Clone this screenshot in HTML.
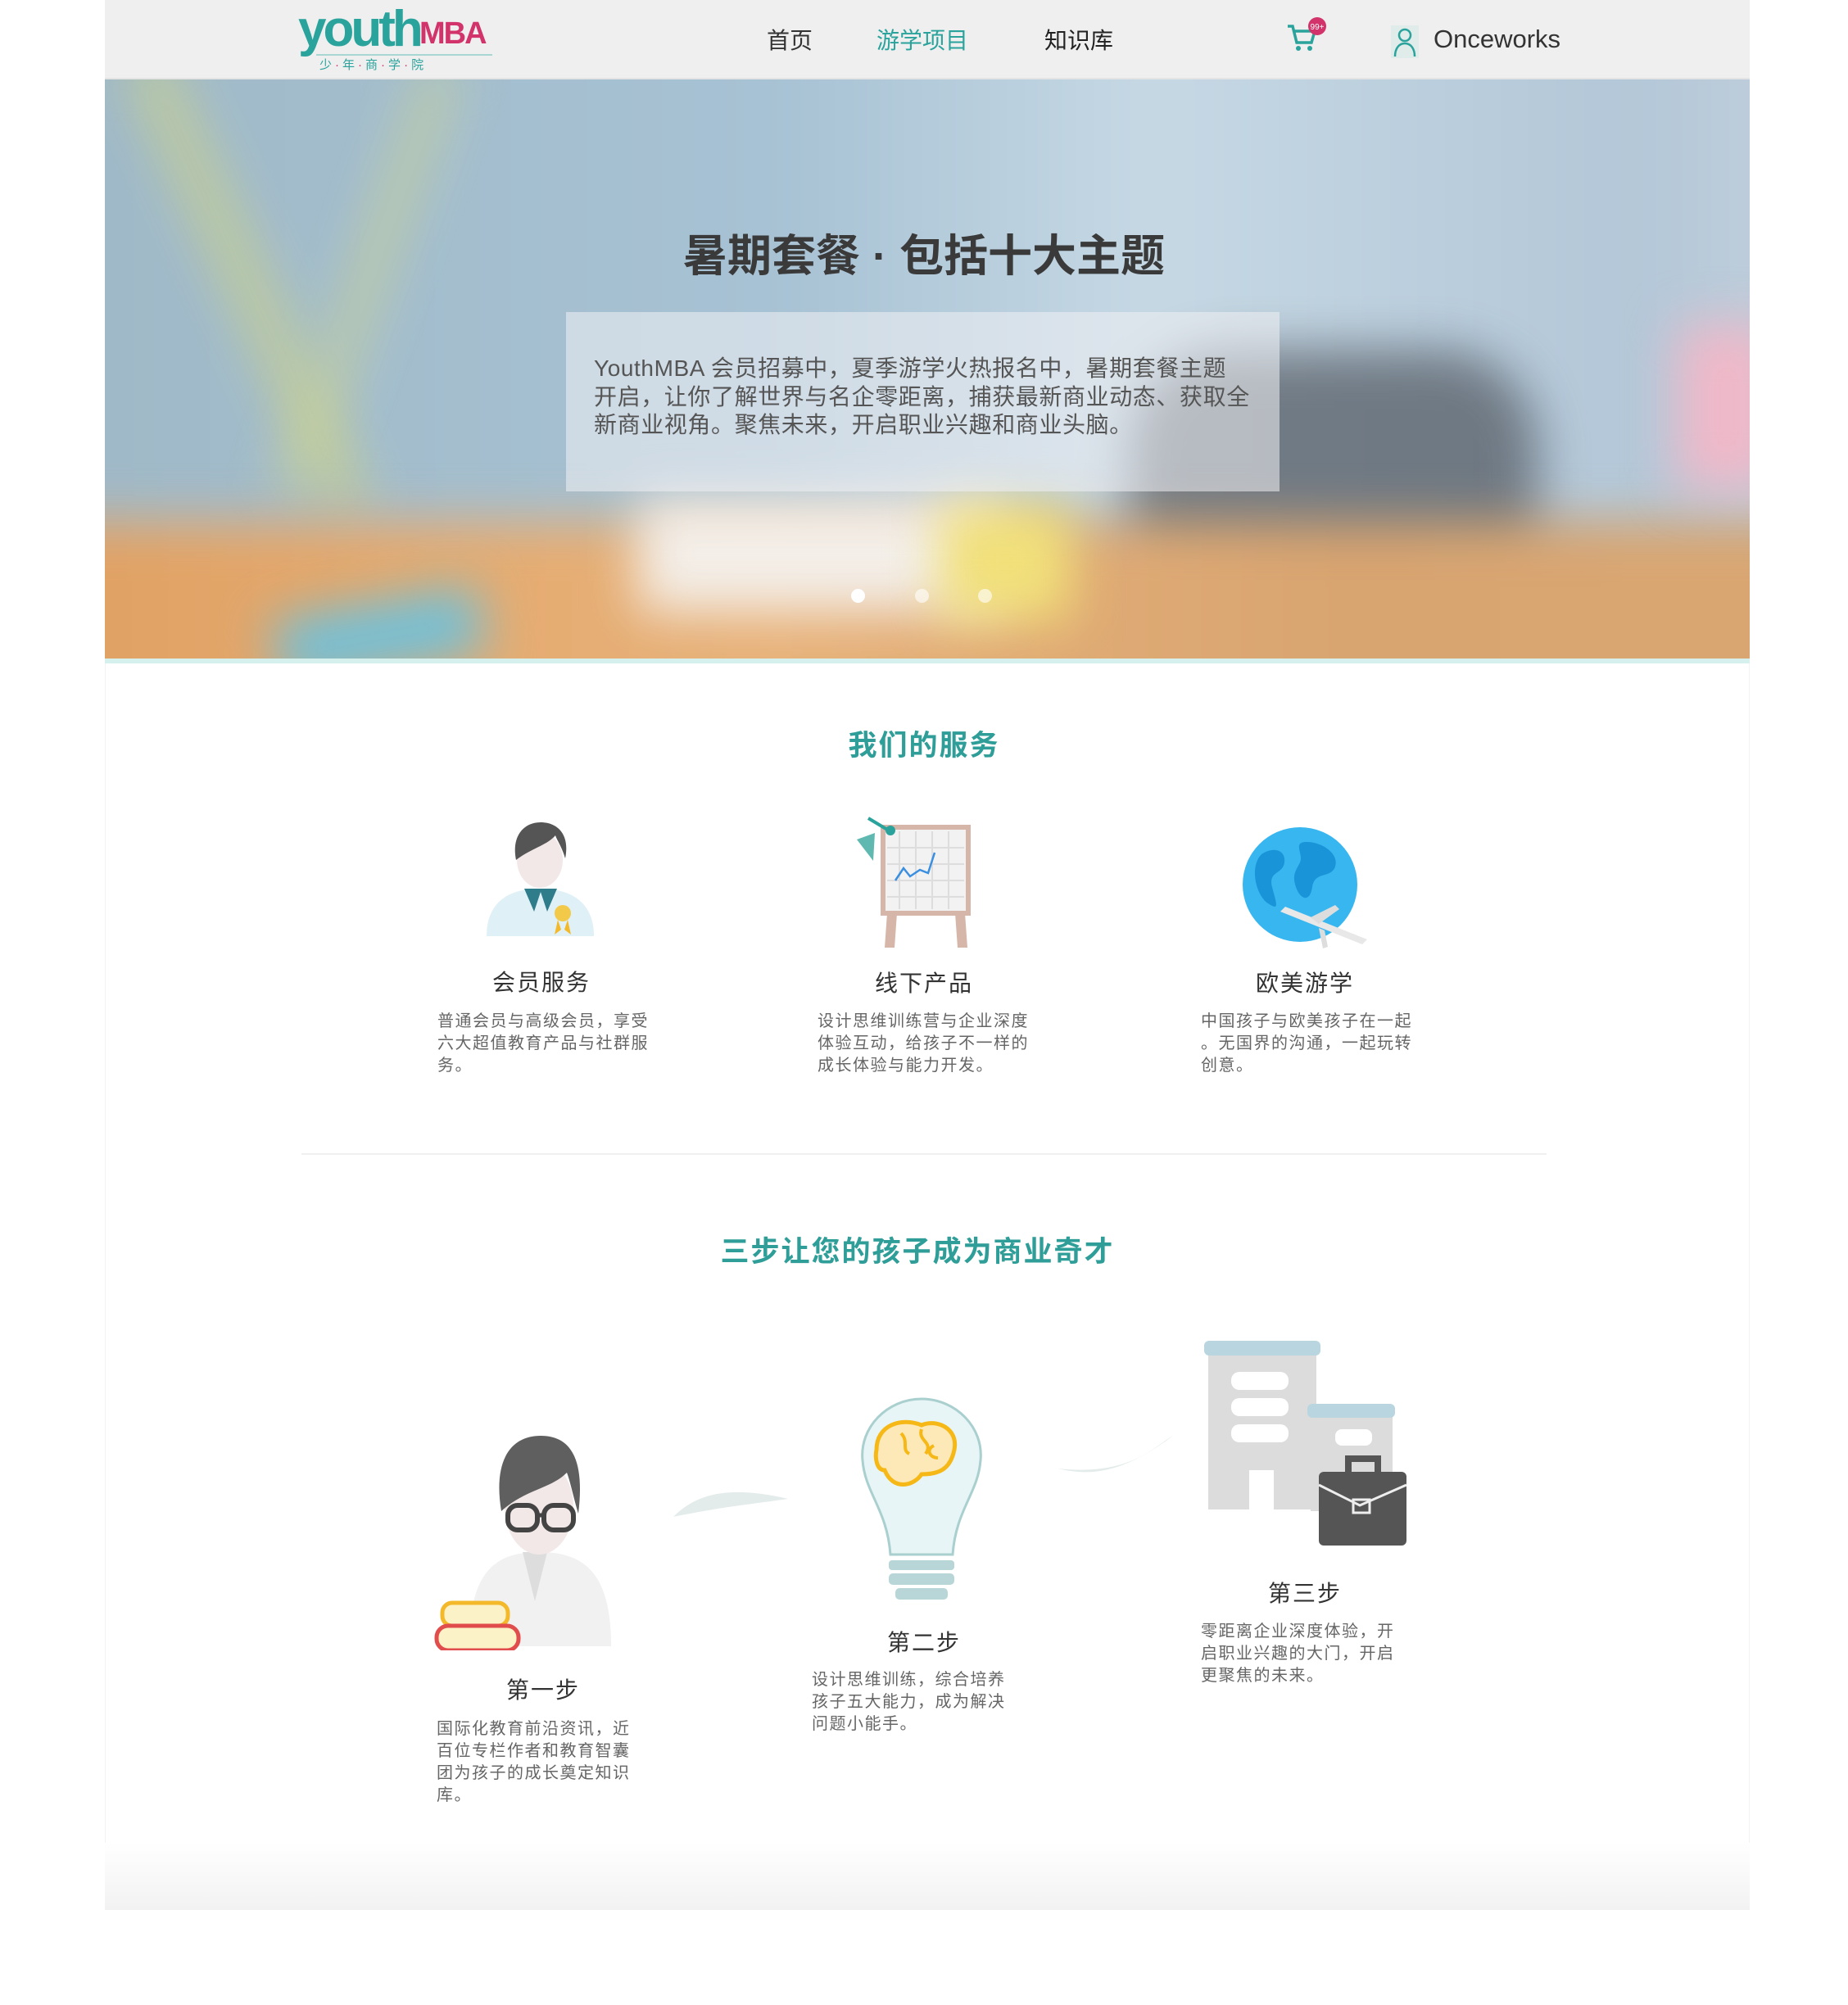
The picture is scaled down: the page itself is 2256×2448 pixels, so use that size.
<!DOCTYPE html>
<html><head><meta charset="utf-8">
<style>
*{margin:0;padding:0;box-sizing:border-box}
body{width:2256px;height:2448px;background:#fff;position:relative;overflow:hidden;font-family:"Liberation Sans","Noto Sans CJK SC",sans-serif;color:#333}
.abs{position:absolute}
#page{position:absolute;left:128px;top:0;width:2008px;height:2332px;background:#fff;border-left:1px solid #f3f3f3;border-right:1px solid #f3f3f3}
#hdr{position:absolute;left:128px;top:0;width:2008px;height:97px;background:#efefef;border-bottom:2px solid #e4e4e4}
.nav{position:absolute;top:28px;font-size:28px;color:#333}
#hero{position:absolute;left:128px;top:97px;width:2008px;height:710px;overflow:hidden;background:#a8c0d2}
#hero .b{position:absolute;filter:blur(30px)}
.t{position:absolute;text-align:center;transform:translateX(-50%);white-space:nowrap}
.h2{color:#2f9e98;font-size:35px;font-weight:bold;letter-spacing:2px}
.ct{font-size:28px;color:#333;letter-spacing:2px}
.d{position:absolute;font-size:20px;line-height:27px;color:#666;white-space:nowrap;letter-spacing:1.5px}
</style></head><body>
<div id="page"></div>
<div class="abs" style="left:128px;top:2250px;width:2008px;height:82px;background:linear-gradient(#fff,#f2f2f2)"></div>

<div id="hdr">
  <div class="abs" style="left:236px;top:0px;font-size:62px;font-weight:bold;color:#2aa39c;letter-spacing:-4px">youth</div>
  <div class="abs" style="left:384px;top:20px;font-size:38px;font-weight:bold;color:#d1336a;letter-spacing:-2px">MBA</div>
  <div class="abs" style="left:258px;top:66px;width:215px;border-top:2px solid #a8d6d3"></div>
  <div class="abs" style="left:262px;top:68px;font-size:15px;color:#2aa39c;letter-spacing:4px">少<span style="color:#d1336a">·</span>年<span style="color:#d1336a">·</span>商<span style="color:#d1336a">·</span>学<span style="color:#d1336a">·</span>院</div>
  <div class="nav" style="left:808px">首页</div>
  <div class="nav" style="left:942px;color:#2aa39c">游学项目</div>
  <div class="nav" style="left:1147px;color:#222">知识库</div>
  <svg class="abs" style="left:1442px;top:18px" width="50" height="50" viewBox="0 0 50 50"><path d="M2 14h6l5 20h18l4-14H10" fill="none" stroke="#2aa39c" stroke-width="3.5"/><circle cx="15" cy="41" r="3" fill="#2aa39c"/><circle cx="29" cy="41" r="3" fill="#2aa39c"/><circle cx="38" cy="14" r="11" fill="#d1336a"/><text x="38" y="18" font-size="10" fill="#fff" text-anchor="middle" font-family="Liberation Sans">99+</text></svg>
  <div class="abs" style="left:1570px;top:31px;width:34px;height:40px;background:#e0ecea"></div>
  <svg class="abs" style="left:1570px;top:31px" width="34" height="40" viewBox="0 0 34 40"><circle cx="17" cy="12" r="7" fill="none" stroke="#2aa39c" stroke-width="2.5"/><path d="M5 38c0-10 5-16 12-16s12 6 12 16" fill="none" stroke="#2aa39c" stroke-width="2.5"/></svg>
  <div class="abs" style="left:1622px;top:30px;font-size:31px;color:#333">Onceworks</div>
</div>

<div id="hero">
  <div class="b" style="left:-100px;top:-100px;width:2300px;height:650px;background:linear-gradient(90deg,#9fb8c6,#a7c2d4 40%,#c6d8e4 60%,#b3c7d8 85%,#c8d3dd)"></div>
  <div class="b" style="left:150px;top:-50px;width:50px;height:600px;background:#c9d08e;transform:rotate(-25deg);opacity:.8"></div>
  <div class="b" style="left:300px;top:-30px;width:40px;height:550px;background:#cbd396;transform:rotate(20deg);opacity:.7"></div>
  <div class="b" style="left:1250px;top:330px;width:500px;height:350px;background:#565d66;opacity:.75;border-radius:120px"></div>
  <div class="b" style="left:-100px;top:540px;width:2300px;height:300px;background:linear-gradient(90deg,#e0a062,#e8b27a 40%,#d8a470 70%,#d9a773)"></div>
  <div class="b" style="left:650px;top:510px;width:450px;height:140px;background:#f3eee8"></div>
  <div class="b" style="left:1020px;top:520px;width:160px;height:140px;background:#f1e07a"></div>
  <div class="b" style="left:210px;top:640px;width:250px;height:80px;background:#6ec1dc;transform:rotate(-10deg)"></div>
  <div class="b" style="left:1920px;top:300px;width:120px;height:200px;background:#f0b8c8"></div>
  <div class="t" style="left:1000px;top:171px;font-size:54px;font-weight:bold;color:#3a3a3a">暑期套餐 · 包括十大主题</div>
  <div class="abs" style="left:563px;top:284px;width:871px;height:219px;background:rgba(240,240,244,0.55)"></div>
  <div class="abs" style="left:597px;top:336px;font-size:28px;line-height:34.5px;color:#555;white-space:nowrap;letter-spacing:0.6px">YouthMBA 会员招募中，夏季游学火热报名中，暑期套餐主题<br>开启，让你了解世界与名企零距离，捕获最新商业动态、获取全<br>新商业视角。聚焦未来，开启职业兴趣和商业头脑。</div>
  <div class="abs" style="left:911px;top:622px;width:17px;height:17px;border-radius:50%;background:#fff"></div>
  <div class="abs" style="left:989px;top:622px;width:17px;height:17px;border-radius:50%;background:rgba(255,255,255,.6)"></div>
  <div class="abs" style="left:1066px;top:622px;width:17px;height:17px;border-radius:50%;background:rgba(255,255,255,.6)"></div>
</div>
<div class="abs" style="left:128px;top:804px;width:2008px;height:6px;background:#d6f0ee"></div>

<div class="t h2" style="left:1128px;top:882px">我们的服务</div>

<svg class="abs" style="left:592px;top:1000px" width="135" height="145" viewBox="0 0 135 145">
<path d="M2 143c0-40 25-58 65-58s66 18 66 58z" fill="#dff0f6"/>
<path d="M48 85l12 28 8-24 8 24 12-28" fill="#2f7c8a"/>
<ellipse cx="67" cy="50" rx="28" ry="34" fill="#f2e8e8"/>
<path d="M38 50c-6-30 10-46 30-46s36 14 30 44c-4-14-10-22-12-28-10 12-30 16-48 30z" fill="#555"/>
<circle cx="95" cy="115" r="10" fill="#f3c94a"/><path d="M89 123l-4 18 8-6M101 123l4 18-8-6" fill="#f3b92a"/>
</svg>
<svg class="abs" style="left:1038px;top:995px" width="150" height="165" viewBox="0 0 150 165">
<rect x="40" y="15" width="104" height="105" fill="#f2f2f2" stroke="#d5b6a8" stroke-width="6"/>
<path d="M45 40h94M45 60h94M45 80h94M45 100h94M60 20v95M80 20v95M100 20v95M120 20v95" stroke="#ddd" stroke-width="2"/>
<path d="M55 80l10-15 8 10 12-8 10 4 8-25" fill="none" stroke="#3b8fe0" stroke-width="2.5"/>
<path d="M45 120l-3 42h12l3-42M128 120l3 42h12l-3-42" fill="#d5b6a8"/>
<path d="M22 4l25 15" stroke="#2aa39c" stroke-width="4"/><circle cx="49" cy="19" r="6" fill="#2aa39c"/>
<path d="M8 30l22-8-2 34z" fill="#5fb9b1"/>
</svg>
<svg class="abs" style="left:1515px;top:1008px" width="160" height="155" viewBox="0 0 160 155">
<circle cx="72" cy="72" r="70" fill="#38b6ef"/>
<path d="M25 35c15-10 30-5 28 10s-20 10-15 30 10 30-5 20S10 50 25 35zM80 20c20 0 40 15 35 30s-25 5-28 25-15 15-20 0 0-20 5-30-10-25 8-25z" fill="#1a94d8"/>
<path d="M48 105l100 40 6-6-100-40z" fill="#e8e8e8"/><path d="M85 112l30-15 5 5-25 18zM95 125l5 25 6-2-4-20z" fill="#ddd"/>
</svg>

<div class="t ct" style="left:661px;top:1178px">会员服务</div>
<div class="t ct" style="left:1128px;top:1179px">线下产品</div>
<div class="t ct" style="left:1593px;top:1179px">欧美游学</div>
<div class="d" style="left:534px;top:1234px">普通会员与高级会员，享受<br>六大超值教育产品与社群服<br>务。</div>
<div class="d" style="left:998px;top:1234px">设计思维训练营与企业深度<br>体验互动，给孩子不一样的<br>成长体验与能力开发。</div>
<div class="d" style="left:1466px;top:1234px">中国孩子与欧美孩子在一起<br>。无国界的沟通，一起玩转<br>创意。</div>

<div class="abs" style="left:368px;top:1408px;width:1520px;height:2px;background:#f0f0f0"></div>
<div class="t h2" style="left:1120px;top:1500px">三步让您的孩子成为商业奇才</div>

<svg class="abs" style="left:528px;top:1750px" width="262" height="265" viewBox="0 0 262 265">
<path d="M45 260c0-90 30-115 85-115s88 25 88 115z" fill="#f1f1f1"/>
<path d="M110 145l15 60 15-60z" fill="#ddd"/>
<ellipse cx="130" cy="90" rx="42" ry="58" fill="#f2e8e8"/>
<path d="M84 95c-10-60 10-92 48-92s54 30 46 95c-6-20-10-40-14-50-20 20-50 20-80 47z" fill="#5f5f5f"/>
<rect x="92" y="88" width="36" height="30" rx="12" fill="none" stroke="#444" stroke-width="6"/>
<rect x="136" y="88" width="36" height="30" rx="12" fill="none" stroke="#444" stroke-width="6"/>
<path d="M128 100h8" stroke="#444" stroke-width="5"/>
<rect x="12" y="207" width="80" height="28" rx="12" fill="#fcf2c8" stroke="#f3b92a" stroke-width="5"/>
<rect x="5" y="235" width="100" height="30" rx="14" fill="#fcf2c8" stroke="#e14c4c" stroke-width="5"/>
</svg>
<svg class="abs" style="left:820px;top:1810px" width="150" height="45" viewBox="0 0 150 45"><path d="M2 42c30-30 70-38 140-22-40 6-70 8-140 22z" fill="#e3ecea"/></svg>
<svg class="abs" style="left:1290px;top:1748px" width="150" height="56" viewBox="0 0 150 56"><path d="M2 45c40 10 80 5 140-40-20 10-50 50-140 40z" fill="#e3ecea"/></svg>
<svg class="abs" style="left:1045px;top:1705px" width="160" height="250" viewBox="0 0 160 250">
<path d="M80 3c-42 0-76 35-72 75 3 40 30 60 34 115h76c4-55 31-75 34-115 4-40-30-75-72-75z" fill="#e8f5f6" stroke="#a9cfcf" stroke-width="3"/>
<path d="M25 65c0-30 30-40 55-30 20-8 45 5 40 30s-20 30-40 30c-10 15-35 20-45-5-10 0-12-15-10-25z" fill="#fde9b8" stroke="#f5b816" stroke-width="5"/>
<path d="M55 45c10 10 0 20 10 25M80 40c-5 15 15 15 5 30M95 60c-10 5-5 15 5 15" fill="none" stroke="#f5b816" stroke-width="4"/>
<rect x="40" y="200" width="80" height="12" rx="4" fill="#b8d6d7"/>
<rect x="40" y="216" width="80" height="14" rx="5" fill="#b8d6d7"/>
<rect x="48" y="234" width="64" height="14" rx="5" fill="#b8d6d7"/>
</svg>
<svg class="abs" style="left:1470px;top:1635px" width="255" height="255" viewBox="0 0 255 255">
<rect x="5" y="8" width="132" height="200" fill="#dcdcdc"/>
<rect x="0" y="2" width="142" height="18" rx="6" fill="#b9d5df"/>
<rect x="130" y="85" width="100" height="125" fill="#dcdcdc"/>
<rect x="126" y="79" width="107" height="17" rx="6" fill="#b9d5df"/>
<rect x="33" y="40" width="70" height="22" rx="10" fill="#fff"/>
<rect x="33" y="72" width="70" height="22" rx="10" fill="#fff"/>
<rect x="33" y="104" width="70" height="22" rx="10" fill="#fff"/>
<rect x="55" y="160" width="30" height="48" fill="#fff"/>
<rect x="160" y="110" width="45" height="20" rx="8" fill="#fff"/>
<rect x="140" y="162" width="107" height="90" rx="6" fill="#555"/>
<path d="M176 162v-16h36v16" fill="none" stroke="#555" stroke-width="8"/>
<path d="M140 178l50 25 57-25" fill="none" stroke="#eee" stroke-width="3"/>
<rect x="182" y="196" width="20" height="16" fill="none" stroke="#eee" stroke-width="3"/>
</svg>

<div class="t ct" style="left:663px;top:2042px">第一步</div>
<div class="t ct" style="left:1128px;top:1984px">第二步</div>
<div class="t ct" style="left:1593px;top:1924px">第三步</div>
<div class="d" style="left:533px;top:2098px">国际化教育前沿资讯，近<br>百位专栏作者和教育智囊<br>团为孩子的成长奠定知识<br>库。</div>
<div class="d" style="left:991px;top:2038px">设计思维训练，综合培养<br>孩子五大能力，成为解决<br>问题小能手。</div>
<div class="d" style="left:1466px;top:1979px">零距离企业深度体验，开<br>启职业兴趣的大门，开启<br>更聚焦的未来。</div>
</body></html>
